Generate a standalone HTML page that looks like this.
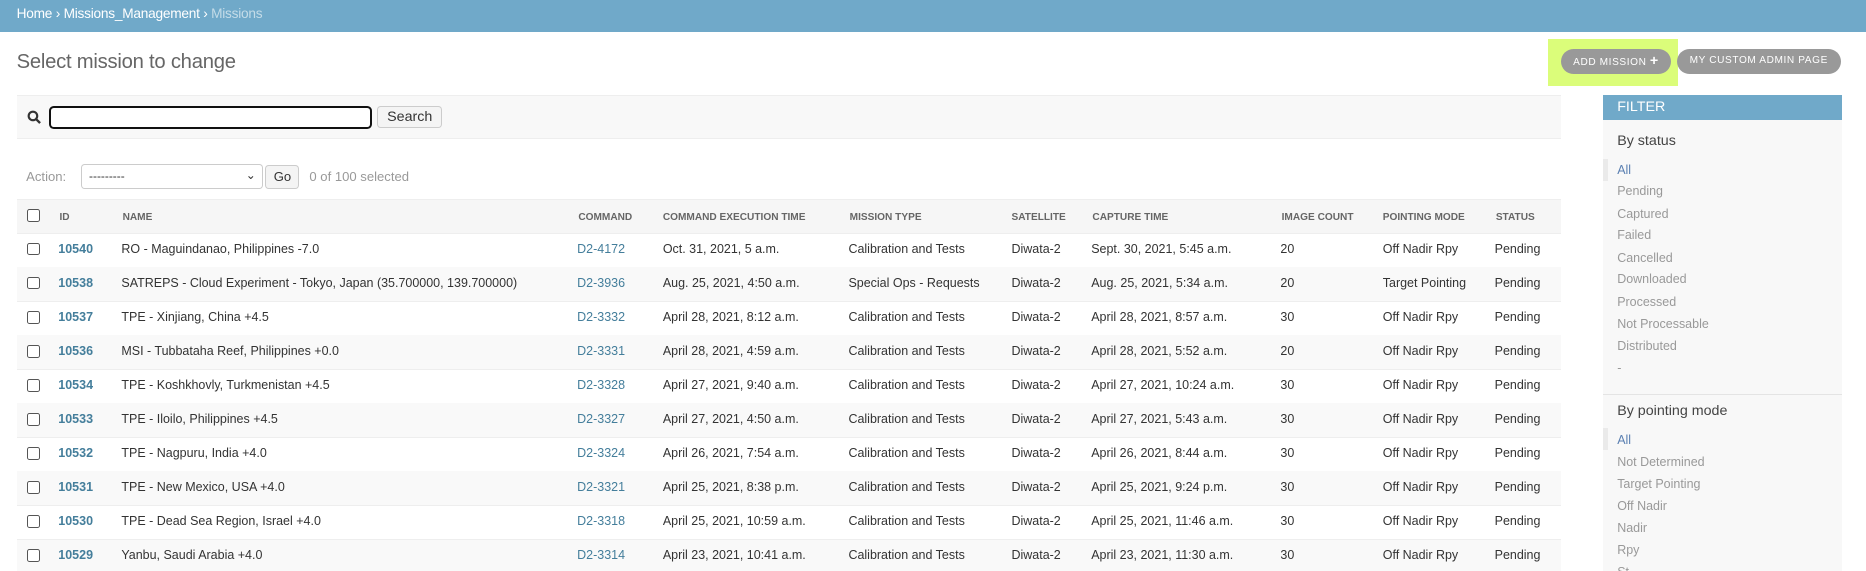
<!DOCTYPE html>
<html><head><meta charset="utf-8"><style>
html,body{margin:0;padding:0;background:#fff;width:1866px;height:571px;overflow:hidden}
#w{zoom:1.19;width:1568px;height:480px;position:relative;font-family:"Liberation Sans",sans-serif;color:#333;font-size:11px}
.a{position:absolute;white-space:nowrap}
#hdr{left:0;top:0;width:1568px;height:27px;background:#70a9c9}
#hdr span{position:absolute;left:14px;top:5px;font-size:11.5px;color:#fff;letter-spacing:-0.2px}
h1{position:absolute;left:14px;top:43px;margin:0;font-size:17px;font-weight:normal;color:#666;letter-spacing:-0.2px}
.btn{position:absolute;top:41px;height:21px;border-radius:11px;background:#999;color:#fff;font-size:8.5px;letter-spacing:0.5px;line-height:21px;text-align:center}
#search{left:14px;top:80px;width:1298px;height:35px;background:#f8f8f8;border-top:1px solid #eee;border-bottom:1px solid #eee}
input.s{position:absolute;left:27px;top:8px;width:268px;height:16px;border:2px solid #111;border-radius:4px;background:#fff;margin:0;padding:0}
.b2{position:absolute;background:#f4f4f4;border:1px solid #ccc;border-radius:3px;font-size:12px;text-align:center;color:#333}
.row{position:absolute;left:14px;width:1298px;height:28px;border-bottom:1px solid #eee}
.row span{position:absolute;top:7px;font-size:10.5px;white-space:nowrap}
.hd span{font-size:8.5px;font-weight:bold;color:#666;top:10px}
.cb{position:absolute;left:9px;top:8px;width:9px;height:9px;border:1px solid #555;border-radius:2px;background:#fff}
.id{font-weight:bold;color:#447e9b}
.lk{color:#447e9b}
#flt{left:1347px;top:80px;width:201px;height:400px;background:#f8f8f8}
#flt .t{position:absolute;left:0;top:0;width:201px;height:21px;background:#70a9c9;color:#fff;font-size:12px;line-height:21px;text-indent:12px}
#flt .h{position:absolute;left:12px;font-size:12px;color:#444}
#flt .i{position:absolute;left:12px;font-size:10.5px;color:#999}
</style></head><body><div id="w">
<div class="a" id="hdr"><span>Home › Missions_Management › <span style="position:static;color:#c4dce8">Missions</span></span></div>
<h1>Select mission to change</h1>
<div class="a" style="left:1301px;top:33px;width:109px;height:39px;background:#dbfd7a"></div>
<div class="btn" style="left:1312px;width:92px">ADD MISSION&nbsp;<b style="font-size:12px">+</b></div>
<div class="btn" style="left:1409px;width:138px">MY CUSTOM ADMIN PAGE</div>
<div class="a" id="search">
<svg style="position:absolute;left:9px;top:12px" width="12" height="12" viewBox="0 0 12 12"><circle cx="5" cy="5" r="3.6" fill="none" stroke="#333" stroke-width="1.8"/><line x1="7.6" y1="7.6" x2="11" y2="11" stroke="#333" stroke-width="2"/></svg>
<input class="s"><div class="b2" style="left:303px;top:8px;width:53px;height:17px;line-height:17px">Search</div></div>
<div class="a" style="left:22px;top:142px;color:#999">Action:</div>
<div class="a" style="left:68px;top:138px;width:151px;height:19px;border:1px solid #ccc;border-radius:3px;background:#fff"><span style="position:absolute;left:6px;top:3px;font-size:10px">---------</span><span style="position:absolute;right:5px;top:2px;font-size:10px">⌄</span></div>
<div class="b2" style="left:223px;top:139px;width:27px;height:18px;line-height:19px;font-size:11px">Go</div>
<div class="a" style="left:260px;top:142px;color:#999">0 of 100 selected</div>
<div class="row hd" style="top:167px;background:#f6f6f6;border-top:1px solid #eee"><div class="cb"></div><span style="left:36px">ID</span><span style="left:89px">NAME</span><span style="left:472px">COMMAND</span><span style="left:543px">COMMAND EXECUTION TIME</span><span style="left:700px">MISSION TYPE</span><span style="left:836px">SATELLITE</span><span style="left:904px">CAPTURE TIME</span><span style="left:1063px">IMAGE COUNT</span><span style="left:1148px">POINTING MODE</span><span style="left:1243px">STATUS</span></div>
<div class="row" style="top:196px"><div class="cb"></div><span class="id" style="left:35px">10540</span><span style="left:88px">RO - Maguindanao, Philippines -7.0</span><span class="lk" style="left:471px">D2-4172</span><span style="left:543px">Oct. 31, 2021, 5 a.m.</span><span style="left:699px">Calibration and Tests</span><span style="left:836px">Diwata-2</span><span style="left:903px">Sept. 30, 2021, 5:45 a.m.</span><span style="left:1062px">20</span><span style="left:1148px">Off Nadir Rpy</span><span style="left:1242px">Pending</span></div>
<div class="row" style="top:224.6px;background:#f9f9f9"><div class="cb"></div><span class="id" style="left:35px">10538</span><span style="left:88px">SATREPS - Cloud Experiment - Tokyo, Japan (35.700000, 139.700000)</span><span class="lk" style="left:471px">D2-3936</span><span style="left:543px">Aug. 25, 2021, 4:50 a.m.</span><span style="left:699px">Special Ops - Requests</span><span style="left:836px">Diwata-2</span><span style="left:903px">Aug. 25, 2021, 5:34 a.m.</span><span style="left:1062px">20</span><span style="left:1148px">Target Pointing</span><span style="left:1242px">Pending</span></div>
<div class="row" style="top:253.2px"><div class="cb"></div><span class="id" style="left:35px">10537</span><span style="left:88px">TPE - Xinjiang, China +4.5</span><span class="lk" style="left:471px">D2-3332</span><span style="left:543px">April 28, 2021, 8:12 a.m.</span><span style="left:699px">Calibration and Tests</span><span style="left:836px">Diwata-2</span><span style="left:903px">April 28, 2021, 8:57 a.m.</span><span style="left:1062px">30</span><span style="left:1148px">Off Nadir Rpy</span><span style="left:1242px">Pending</span></div>
<div class="row" style="top:281.8px;background:#f9f9f9"><div class="cb"></div><span class="id" style="left:35px">10536</span><span style="left:88px">MSI - Tubbataha Reef, Philippines +0.0</span><span class="lk" style="left:471px">D2-3331</span><span style="left:543px">April 28, 2021, 4:59 a.m.</span><span style="left:699px">Calibration and Tests</span><span style="left:836px">Diwata-2</span><span style="left:903px">April 28, 2021, 5:52 a.m.</span><span style="left:1062px">20</span><span style="left:1148px">Off Nadir Rpy</span><span style="left:1242px">Pending</span></div>
<div class="row" style="top:310.4px"><div class="cb"></div><span class="id" style="left:35px">10534</span><span style="left:88px">TPE - Koshkhovly, Turkmenistan +4.5</span><span class="lk" style="left:471px">D2-3328</span><span style="left:543px">April 27, 2021, 9:40 a.m.</span><span style="left:699px">Calibration and Tests</span><span style="left:836px">Diwata-2</span><span style="left:903px">April 27, 2021, 10:24 a.m.</span><span style="left:1062px">30</span><span style="left:1148px">Off Nadir Rpy</span><span style="left:1242px">Pending</span></div>
<div class="row" style="top:339px;background:#f9f9f9"><div class="cb"></div><span class="id" style="left:35px">10533</span><span style="left:88px">TPE - Iloilo, Philippines +4.5</span><span class="lk" style="left:471px">D2-3327</span><span style="left:543px">April 27, 2021, 4:50 a.m.</span><span style="left:699px">Calibration and Tests</span><span style="left:836px">Diwata-2</span><span style="left:903px">April 27, 2021, 5:43 a.m.</span><span style="left:1062px">30</span><span style="left:1148px">Off Nadir Rpy</span><span style="left:1242px">Pending</span></div>
<div class="row" style="top:367.6px"><div class="cb"></div><span class="id" style="left:35px">10532</span><span style="left:88px">TPE - Nagpuru, India +4.0</span><span class="lk" style="left:471px">D2-3324</span><span style="left:543px">April 26, 2021, 7:54 a.m.</span><span style="left:699px">Calibration and Tests</span><span style="left:836px">Diwata-2</span><span style="left:903px">April 26, 2021, 8:44 a.m.</span><span style="left:1062px">30</span><span style="left:1148px">Off Nadir Rpy</span><span style="left:1242px">Pending</span></div>
<div class="row" style="top:396.2px;background:#f9f9f9"><div class="cb"></div><span class="id" style="left:35px">10531</span><span style="left:88px">TPE - New Mexico, USA +4.0</span><span class="lk" style="left:471px">D2-3321</span><span style="left:543px">April 25, 2021, 8:38 p.m.</span><span style="left:699px">Calibration and Tests</span><span style="left:836px">Diwata-2</span><span style="left:903px">April 25, 2021, 9:24 p.m.</span><span style="left:1062px">30</span><span style="left:1148px">Off Nadir Rpy</span><span style="left:1242px">Pending</span></div>
<div class="row" style="top:424.8px"><div class="cb"></div><span class="id" style="left:35px">10530</span><span style="left:88px">TPE - Dead Sea Region, Israel +4.0</span><span class="lk" style="left:471px">D2-3318</span><span style="left:543px">April 25, 2021, 10:59 a.m.</span><span style="left:699px">Calibration and Tests</span><span style="left:836px">Diwata-2</span><span style="left:903px">April 25, 2021, 11:46 a.m.</span><span style="left:1062px">30</span><span style="left:1148px">Off Nadir Rpy</span><span style="left:1242px">Pending</span></div>
<div class="row" style="top:453.4px;background:#f9f9f9"><div class="cb"></div><span class="id" style="left:35px">10529</span><span style="left:88px">Yanbu, Saudi Arabia +4.0</span><span class="lk" style="left:471px">D2-3314</span><span style="left:543px">April 23, 2021, 10:41 a.m.</span><span style="left:699px">Calibration and Tests</span><span style="left:836px">Diwata-2</span><span style="left:903px">April 23, 2021, 11:30 a.m.</span><span style="left:1062px">30</span><span style="left:1148px">Off Nadir Rpy</span><span style="left:1242px">Pending</span></div>
<div class="a" id="flt"><div class="t">FILTER</div>
<div class="h" style="top:32px">By status</div>
<div style="position:absolute;left:0;top:54px;width:4px;height:18px;background:#eaeaea"></div>
<div class="i" style="top:57px;color:#5b80b2">All</div>
<div class="i" style="top:75px">Pending</div>
<div class="i" style="top:94px">Captured</div>
<div class="i" style="top:112px">Failed</div>
<div class="i" style="top:131px">Cancelled</div>
<div class="i" style="top:149px">Downloaded</div>
<div class="i" style="top:168px">Processed</div>
<div class="i" style="top:186px">Not Processable</div>
<div class="i" style="top:205px">Distributed</div>
<div class="i" style="top:223px">-</div>
<div style="position:absolute;left:0;top:251px;width:201px;height:1px;background:#e4e4e4"></div>
<div class="h" style="top:259px">By pointing mode</div>
<div style="position:absolute;left:0;top:280px;width:4px;height:18px;background:#eaeaea"></div>
<div class="i" style="top:284px;color:#5b80b2">All</div>
<div class="i" style="top:302px">Not Determined</div>
<div class="i" style="top:321px">Target Pointing</div>
<div class="i" style="top:339px">Off Nadir</div>
<div class="i" style="top:358px">Nadir</div>
<div class="i" style="top:376px">Rpy</div>
<div class="i" style="top:395px">St</div>
</div>
</div></body></html>
